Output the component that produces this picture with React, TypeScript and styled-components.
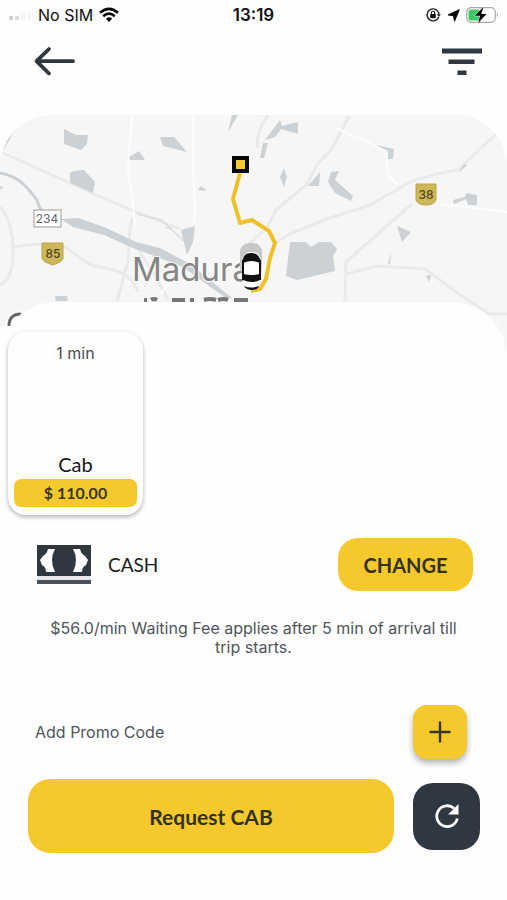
import React from "react";
import styled, { createGlobalStyle } from "styled-components";

const ink = "#2f3840";
const yellow = "#f5c92e";
const display = `Lato, "Open Sans", sans-serif`;
const body = `Inter, Roboto, sans-serif`;

const GlobalStyle = createGlobalStyle`
  *, *::before, *::after { box-sizing: border-box; }
  body { margin: 0; background: #fefefe; font-family: ${body}; color: #111; }
  button { border: 0; padding: 0; cursor: pointer; font: inherit; }
  svg { display: block; }
`;

const Screen = styled.main`
  display: flex;
  flex-direction: column;
  min-height: 100vh;
`;

const StatusBar = styled.div`
  display: grid;
  grid-template-columns: 1fr auto 1fr;
  align-items: center;
  height: 30px;
  padding: 0 8px;
  font-size: 16px;
`;

const StatusGroup = styled.div<{ $end?: boolean }>`
  display: flex;
  align-items: center;
  justify-content: ${(p) => (p.$end ? "flex-end" : "flex-start")};
  gap: 6px;
`;

const Clock = styled.time`
  font-size: 17px;
  font-weight: 600;
`;

const TopBar = styled.header`
  display: flex;
  justify-content: space-between;
  align-items: flex-start;
  height: 85px;
  padding: 16px 24px 0 32px;
`;

const IconButton = styled.button`
  background: transparent;
`;

const MapPanel = styled.section`
  height: 248px;
  border-radius: 52px 52px 0 0;
  overflow: hidden;
  background: #f5f6f5;
`;

const Sheet = styled.section`
  position: relative;
  flex: 1;
  display: flex;
  flex-direction: column;
  margin-top: -61px;
  padding-top: 24px;
  border-radius: 56px 56px 0 0;
  background: #fefefe;
`;

const CabList = styled.div`
  align-self: flex-start;
  padding: 6px 8px 8px;
  background: #fefefe;
  border-radius: 0 20px 0 0;
`;

const CabCard = styled.button`
  display: flex;
  flex-direction: column;
  align-items: center;
  width: 135px;
  height: 183px;
  padding: 9px 6px 8px;
  border-radius: 18px;
  background: #fefefe;
  box-shadow: 0 2px 4px rgba(0, 0, 0, 0.3);
`;

const Eta = styled.span`
  font-size: 16px;
  line-height: 24px;
  color: #4d4d4d;
`;

const CabName = styled.span`
  margin-top: auto;
  font-family: ${display};
  font-size: 20px;
  line-height: 24px;
  color: #161616;
`;

const Price = styled.span`
  width: 100%;
  margin-top: 3px;
  border-radius: 7px;
  background: ${yellow};
  font-family: ${display};
  font-weight: 700;
  font-size: 16px;
  line-height: 28px;
  color: #3a3519;
`;

const PaymentRow = styled.div`
  display: flex;
  align-items: center;
  gap: 16px;
  margin-top: 15px;
  padding: 0 34px 0 37px;
`;

const Method = styled.span`
  flex: 1;
  font-family: ${display};
  font-size: 19px;
  line-height: 24px;
  color: #1c1c1c;
`;

const ChangeButton = styled.button`
  width: 135px;
  height: 53px;
  border-radius: 20px;
  background: ${yellow};
  font-family: ${display};
  font-weight: 700;
  font-size: 20px;
  color: #333217;
`;

const Note = styled.p`
  margin: 28px 40px 0;
  text-align: center;
  font-size: 16px;
  line-height: 19px;
  color: #50555a;
`;

const PromoRow = styled.div`
  display: flex;
  align-items: center;
  justify-content: space-between;
  margin-top: 48px;
  padding: 0 40px 0 35px;
`;

const PromoLabel = styled.label`
  font-size: 16px;
  line-height: 20px;
  color: #50555a;
`;

const AddButton = styled.button`
  display: grid;
  place-items: center;
  width: 54px;
  height: 54px;
  border-radius: 14px;
  background: ${yellow};
  box-shadow: 0 4px 6px rgba(0, 0, 0, 0.3);
`;

const ActionRow = styled.div`
  display: flex;
  align-items: center;
  gap: 19px;
  margin: 20px 27px 47px 28px;
`;

const RequestButton = styled.button`
  flex: 1;
  height: 74px;
  border-radius: 22px;
  background: ${yellow};
  font-family: ${display};
  font-weight: 700;
  font-size: 21px;
  color: #333217;
`;

const RefreshButton = styled.button`
  display: grid;
  place-items: center;
  width: 67px;
  height: 67px;
  border-radius: 20px;
  background: ${ink};
`;

const Signal = () => (
  <svg width="24" height="12" viewBox="0 0 24 12" aria-hidden="true">
    <rect x="1" y="7" width="4" height="4" rx="1" fill="#d0d0d0" />
    <rect x="7" y="7" width="4" height="4" rx="1" fill="#dcdcdc" />
    <rect x="13" y="4" width="4" height="7" rx="1" fill="#f4f4f4" />
    <rect x="19" y="2" width="4" height="9" rx="1" fill="#f6f6f6" />
  </svg>
);

const Wifi = () => (
  <svg width="20" height="16" viewBox="0 0 20 16" aria-hidden="true">
    <g fill="none" stroke="#080808" strokeWidth="2.6">
      <path d="M1 5.8Q10-2 19 5.8" />
      <path d="M4.2 9.2Q10 4 15.8 9.2" />
    </g>
    <path d="M6.9 11.7Q10 9 13.1 11.7L10 15Z" fill="#080808" />
  </svg>
);

const RotationLock = () => (
  <svg width="15" height="14" viewBox="0 0 15 14" aria-hidden="true">
    <path d="M12 3.4A6 6 0 1 0 12.7 9" fill="none" stroke="#222" strokeWidth="1.4" />
    <path d="M10.7 6.3h4.2l-2.1 2.8z" fill="#222" />
    <path d="M12 3.5A6 6 0 0 1 13 6.5" fill="none" stroke="#222" strokeWidth="1.4" />
    <rect x="4.2" y="6" width="5.6" height="4.2" rx=".6" fill="#111" />
    <path d="M5.3 6V5a1.7 1.7 0 0 1 3.4 0v1" fill="none" stroke="#111" strokeWidth="1.1" />
  </svg>
);

const Location = () => (
  <svg width="13" height="13" viewBox="0 0 13 13" aria-hidden="true">
    <path d="M12.3.7 7.5 12.2 6.500 6.7 1 5.900Z" fill="#080808" stroke="#080808" strokeLinejoin="round" />
  </svg>
);

const Battery = () => (
  <svg width="33" height="18" viewBox="0 0 33 18" aria-hidden="true">
    <rect x=".7" y="1.7" width="28.6" height="14.6" rx="4.5" fill="#fff" stroke="#a3a8a3" strokeWidth="1.2" />
    <path d="M5 3.5h8v11H5a2.5 2.5 0 0 1-2.500-2.500V6A2.500 2.500 0 0 1 5 3.500Z" fill="#3cc965" />
    <path d="M31 6.500q1.800 2.500 0 5z" fill="#999" />
    <path d="M17.500.8 8.800 9.800h5.200L12 17.200 20.500 8h-5.200Z" fill="#080808" stroke="#fff" strokeWidth="1" paintOrder="stroke" />
  </svg>
);

const BackArrow = () => (
  <svg width="44" height="32" viewBox="0 0 44 32" aria-hidden="true">
    <path d="M17 3 4.500 15.200 17 27.500M5 15.200h36" fill="none" stroke={ink} strokeWidth="3.800" strokeLinecap="round" strokeLinejoin="round" />
  </svg>
);

const FilterIcon = () => (
  <svg width="42" height="32" viewBox="0 0 42 32" aria-hidden="true">
    <path d="M1 2.500h40v5H1zM7.500 13.500h26v4.500h-26zM16.500 24.500h9v4.500h-9z" fill={ink} />
  </svg>
);

const CashIcon = () => (
  <svg width="55" height="40" viewBox="0 0 55 40" aria-hidden="true">
    <path d="M0 0h54v31H0z" fill={ink} />
    <path d="M0 31h54v4H0z" fill="#e6e8eb" />
    <path d="M0 35h54v4H0z" fill="#4a525b" />
    <path d="M11 4h7q-6 11 0 23H9q0-5-4-7l-2-5 3-4q4-2 5-7ZM43 4h-7q6 11 0 23h9q0-5 4-7l2-5-3-4q-4-2-5-7Z" fill="#fbfcff" />
  </svg>
);

const Plus = () => (
  <svg width="22" height="22" viewBox="0 0 22 22" aria-hidden="true">
    <path d="M11 1.500v19M1.500 11h19" stroke="#38341f" strokeWidth="2.400" strokeLinecap="round" />
  </svg>
);

const Refresh = () => (
  <svg width="26" height="26" viewBox="0 0 26 26" aria-hidden="true">
    <path d="M23.300 15.500A10.400 10.400 0 1 1 20 5.300" fill="none" stroke="#fff" strokeWidth="2.800" />
    <path d="M24.500 1v10.500H14Z" fill="#fff" />
  </svg>
);

const lakes = [
  "M64 129 76 135 88 135 87 144 81 150 64 144Z",
  "M70 173 74 171 84 170 95 182 93 193 70 183Z",
  "M129 157 139 151 145 160 130 160Z",
  "M160 137 174 137 187 152 163 146Z",
  "M232 115H238L228 132Z",
  "M198 190 201 186 207 191Z",
  "M265 140 280 120 282 126 298 122V134L281 129 275 137Z",
  "M263 143H268L264 158H260Z",
  "M284 168 287 177 284 187 280 177Z",
  "M308 186 320 172 319 186Z",
  "M328 182 331 172 339 171 335 180 353 196 351 201 335 193Z",
  "M375 145 394 149 393 159H388V151Z",
  "M459 172 464 164 467 165 461 171Z",
  "M453 200 465 197 466 193 477 195V205H468L466 199 454 204Z",
  "M397 226 411 232 402 242Z",
  "M388 264 391 252 390 264Z",
  "M426 276 431 275 429 282Z",
  "M0 186 3 187 1 190Z",
  "M55 296H67L68 301H56Z",
  "M3 150 8 137 14 130 10 139Z",
  "M181 230 195 226 193 242 187 255Z",
  "M290 242H306L311 247 319 242H331L337 249 333 256 335 271 297 280 286 276Z",
];

const roads = [
  "M3 153Q50 174 85 190T180 229M0 207Q12 220 13 249T0 285",
  "M13 247Q35 242 61 246C78 252 80 263 95 266S130 270 138 292",
  "M135 215C126 226 132 246 127 264L117 302M134 244Q150 266 169 301",
  "M349 116 332 149 318 163 307 184 276 210 268 226 245 248M290 234 327 219 370 205 412 181 441 173 458 170 497 133",
  "M412 204 380 232 346 262 345 302M346 274 377 266 425 269 459 294 490 314H507",
  "M268 115Q257 128 257 148M275 243 290 234",
];

const whiteRoads = [
  "M132 116 128 169 133 205 135 225",
  "M193 116V164L195 215 188 255 161 294M336 128 385 150 388 176 398 185M440 204 507 212",
];

const Car = () => (
  <g>
    <rect x="240" y="243" width="22" height="34" rx="9" fill="#c6c7c9" />
    <rect x="243" y="252" width="17" height="38" rx="7" fill="#fff" />
    <path d="M243 263v-4q1-6 8-6t9 6v4q-8-4-17 0Z" fill="#111" />
    <path d="M243 274q8 2 17 0v6q-8 4-17 0ZM244 286q7 3 15 0-1 4-7 4t-8-4Z" fill="#111" />
    <path d="M243 260v20M260 260v20" stroke="#111" strokeWidth="2" />
  </g>
);

const CityMap = () => (
  <svg width="100%" height="248" viewBox="0 115 507 248" preserveAspectRatio="xMidYMin slice" role="img" aria-label="Route map of Madurai">
    <rect y="115" width="507" height="248" fill="#f5f6f5" />
    <g fill="none" strokeLinejoin="round">
      {roads.map((d) => <path key={d} d={d} stroke="#e9eaea" strokeWidth="3" />)}
      {whiteRoads.map((d) => <path key={d} d={d} stroke="#fdfdfd" strokeWidth="2" />)}
      <path d="M0 173C22 177 28 190 34 196S37 209 45 213" stroke="#cbd0d4" strokeWidth="3" />
      <path d="M137 214 162 220 190 247M165 227 172 229" stroke="#d9dddf" strokeWidth="1.500" />
    </g>
    <g fill="#cbd1d4">
      {lakes.map((d) => <path key={d} d={d} />)}
      <path d="M61 219 78 218 104 227 136 242 160 248 190 264 216 285 232 298H226L209 286 183 267 157 257 133 248 104 235 73 227Z" />
    </g>
    <rect x="34" y="210" width="27" height="17" fill="#fff" stroke="#999" />
    <path d="M43 243h20v16l-3 3-7 3-8-3-3-3v-16Z" fill="#cdb759" stroke="#b9a44b" />
    <path d="M416 184h20v16q-2 5-10 5t-10-5Z" fill="#cdb759" stroke="#b9a44b" />
    <g fontFamily="Inter, sans-serif" fontSize="12" textAnchor="middle">
      <text x="47" y="223" fill="#666">234</text>
      <text x="53" y="258" fill="#50451a" fontWeight="500">85</text>
      <text x="426" y="199" fill="#50451a" fontWeight="500">38</text>
    </g>
    <text x="132" y="281" fontFamily="Inter, sans-serif" fontSize="33" fill="#858585" stroke="#f8f8f8" strokeWidth="2" paintOrder="stroke">Madurai</text>
    <path d="M144 300h3M151 300q3-2 6 0M172 300h13M190 300h4M204 300q6-2 12 0M218 300q6-2 10 0M234 300h14" stroke="#777" strokeWidth="4" fill="none" />
    <path d="M9 326Q9 314 21 314" fill="none" stroke="#fff" strokeWidth="6" />
    <path d="M9 326Q9 314 21 314" fill="none" stroke="#666" strokeWidth="3" />
    <path d="M240 173 233 199 240 223 252 220 269 231 275 243 270 258 266 279 260 289 251 291" fill="none" stroke="#f0c02b" strokeWidth="4" strokeLinejoin="round" />
    <rect x="234" y="158" width="13" height="13" fill="#f5c92e" stroke="#080808" strokeWidth="4" />
    <Car />
  </svg>
);

export default function App() {
  return (
    <>
      <GlobalStyle />
      <Screen>
        <StatusBar>
          <StatusGroup>
            <Signal />
            <span>No SIM</span>
            <Wifi />
          </StatusGroup>
          <Clock>13:19</Clock>
          <StatusGroup $end>
            <RotationLock />
            <Location />
            <Battery />
          </StatusGroup>
        </StatusBar>
        <TopBar>
          <IconButton aria-label="Back"><BackArrow /></IconButton>
          <IconButton aria-label="Filter"><FilterIcon /></IconButton>
        </TopBar>
        <MapPanel><CityMap /></MapPanel>
        <Sheet>
          <CabList>
            <CabCard>
              <Eta>1 min</Eta>
              <CabName>Cab</CabName>
              <Price>$ 110.00</Price>
            </CabCard>
          </CabList>
          <PaymentRow>
            <CashIcon />
            <Method>CASH</Method>
            <ChangeButton>CHANGE</ChangeButton>
          </PaymentRow>
          <Note>$56.0/min Waiting Fee applies after 5 min of arrival till trip starts.</Note>
          <PromoRow>
            <PromoLabel htmlFor="add-promo">Add Promo Code</PromoLabel>
            <AddButton id="add-promo"><Plus /></AddButton>
          </PromoRow>
          <ActionRow>
            <RequestButton>Request CAB</RequestButton>
            <RefreshButton aria-label="Refresh"><Refresh /></RefreshButton>
          </ActionRow>
        </Sheet>
      </Screen>
    </>
  );
}
